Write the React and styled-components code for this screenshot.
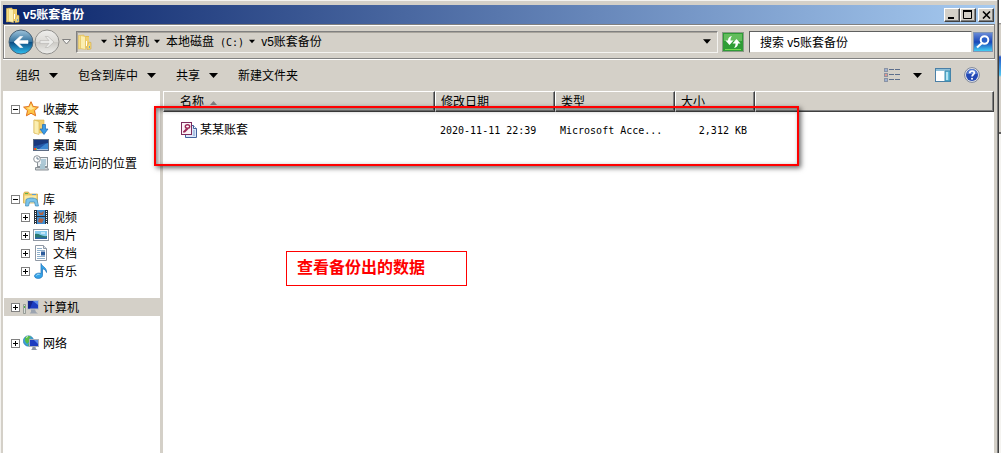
import React from 'react'
import styled, { createGlobalStyle, css } from 'styled-components'

const GlobalStyle = createGlobalStyle`
  * {
    box-sizing: border-box;
  }
  body {
    margin: 0;
    background: #ffffff;
    overflow: hidden;
  }
  body, button, input, table {
    color: #000000;
    font-family: 'Liberation Sans', 'Noto Sans CJK SC', sans-serif;
    font-size: 12px;
    line-height: 18px;
  }
  svg {
    display: block;
    flex: none;
  }
`

const Desktop = styled.div`
  position: relative;
  display: flex;
  min-height: 100vh;
`
const Window = styled.div`
  flex: 1;
  display: flex;
  flex-direction: column;
  padding: 5px 3px 0 1px;
  background: #d4d0c8;
  border-left: 1px solid #f4f3f0;
  border-right: 1px solid #404040;
  box-shadow: inset -1px 0 #808080, inset 0 1px #f4f3f0;
`
const Behind = styled.div`
  width: 2px;
  background: linear-gradient(
    #ffffff 23px, #808080 23px, #d4d0c8 25px, #d4d0c8 55px,
    #2458c8 57px, #4ec3f0 75px, #d4d0c8 77px, #d4d0c8 132px,
    #606060 132px, #606060 134px, #f4f3f0 134px
  );
`

const TitleBar = styled.header`
  display: flex;
  align-items: center;
  height: 19px;
  margin-left: 1px;
  padding: 0 1px 0 2px;
  background: linear-gradient(to right, #0a246a, #a6caf0);
`
const Title = styled.h1`
  flex: 1;
  margin: 0 0 0 2px;
  color: #ffffff;
  font-size: 12px;
  line-height: 18px;
`
const CaptionButton = styled.button`
  display: flex;
  align-items: center;
  justify-content: center;
  width: 16px;
  height: 14px;
  margin-left: ${props => (props.$apart ? '2px' : '0')};
  padding: 0;
  background: #d4d0c8;
  border: 1px solid;
  border-color: #ffffff #404040 #404040 #ffffff;
  box-shadow: inset -1px -1px #808080;
`

const AddressBand = styled.div`
  display: flex;
  align-items: center;
  height: 35px;
  margin-left: 1px;
  padding: 0 1px 0 4px;
  border: 1px solid #808080;
  box-shadow: inset 1px 1px #ffffff, 0 1px #ffffff;
`
const NavButtons = styled.div`
  display: flex;
  align-items: center;
  width: 66px;
`
const PlainButton = styled.button`
  display: flex;
  align-items: center;
  padding: 0;
  background: transparent;
  border: none;
`
const AddressField = styled.nav`
  flex: 1;
  display: flex;
  align-items: center;
  height: 22px;
  margin-left: 2px;
  padding-right: 6px;
  border: 1px solid;
  border-color: #808080 #f4f3f0 #f4f3f0 #808080;
  box-shadow: inset 1px 1px #a8a49c;
`
const Crumbs = styled.ol`
  flex: 1;
  display: flex;
  align-items: center;
  margin: 0;
  padding: 0 0 0 8px;
  list-style: none;
`
const Crumb = styled.li`
  display: flex;
  align-items: center;
  gap: 6px;
  margin-right: 5px;
`
const CrumbLink = styled.a`
  color: #000000;
  text-decoration: none;
  white-space: pre;
`
const Mono = styled.span`
  font-family: 'DejaVu Sans Mono', monospace;
  font-size: 10px;
  line-height: 12px;
`
const RefreshButton = styled(PlainButton)`
  margin: 0 5px 0 4px;
`
const SearchForm = styled.form`
  display: flex;
  align-items: center;
  width: 244px;
  gap: 1px;
`
const SearchInput = styled.input`
  flex: 1;
  min-width: 0;
  height: 22px;
  padding: 0 10px;
  background: #ffffff;
  border: 1px solid;
  border-color: #606060 #d4d0c8 #d4d0c8 #606060;
  border-radius: 0;
  outline: none;
`

const Toolbar = styled.div`
  display: flex;
  align-items: center;
  height: 32px;
  padding: 0 15px 0 14px;
`
const Command = styled(PlainButton)`
  gap: 9px;
  margin-right: 20px;
`
const Label = styled.span`
  padding-top: 2px;
`
const ToolbarRight = styled.div`
  display: flex;
  align-items: center;
  gap: 13px;
  margin-left: auto;
`

const Main = styled.div`
  flex: 1;
  display: flex;
`
const Sidebar = styled.nav`
  width: 158px;
  padding: 9px 0 0 1px;
  background: #ffffff;
  border-left: 1px solid #d4d0c8;
`
const Group = styled.ul`
  margin: 0 0 18px;
  padding: 0;
  list-style: none;
`
const TreeRow = styled.li`
  display: flex;
  align-items: center;
  height: 18px;
  padding-left: ${props => (props.$level === 2 ? '17px' : '7px')};
  ${props => props.$selected && css`
    background: #d4d0c8;
  `}
`
const Toggle = styled.button`
  flex: none;
  display: flex;
  width: 9px;
  height: 9px;
  margin-right: 3px;
  padding: 0;
  background: #ffffff;
  border: 1px solid #808080;
  visibility: ${props => (props.$hidden ? 'hidden' : 'visible')};
`
const TreeLink = styled.a`
  display: flex;
  align-items: center;
  gap: 4px;
  color: #000000;
  text-decoration: none;
  white-space: nowrap;
`

const Content = styled.main`
  flex: 1;
  margin: 0 1px 0 3px;
  background: #ffffff;
`
const FileTable = styled.table`
  width: 100%;
  table-layout: fixed;
  border-collapse: separate;
  border-spacing: 0;
`
const Th = styled.th`
  width: ${props => props.$width || 'auto'};
  height: 21px;
  padding: 2px 0 0 5px;
  background: #d4d0c8;
  border: 1px solid;
  border-color: #ffffff #404040 #404040 #ffffff;
  box-shadow: inset -1px -1px #808080;
  font-weight: normal;
  line-height: 17px;
  text-align: left;
`
const NameHeader = styled.span`
  display: flex;
  align-items: center;
  gap: 6px;
  padding-left: 11px;
`
const Td = styled.td`
  padding: 9px 8px 0 5px;
  text-align: ${props => props.$align || 'left'};
  white-space: nowrap;
`
const FileName = styled.a`
  display: flex;
  align-items: center;
  gap: 3px;
  padding-left: 13px;
  color: #000000;
  text-decoration: none;
`

// red marks drawn over the window
const Highlight = styled.div`
  position: absolute;
  left: 154px;
  top: 106px;
  width: 645px;
  height: 60px;
  border: 2px solid #ff0000;
  box-shadow: 2px 2px 5px rgba(0, 0, 0, 0.6), inset 2px 2px 5px rgba(0, 0, 0, 0.5);
`
const Note = styled.div`
  position: absolute;
  left: 286px;
  top: 251px;
  width: 181px;
  padding: 4px 10px 5px;
  border: 1px solid #ff0000;
  color: #ff0000;
  font-size: 16px;
  font-weight: bold;
  line-height: 24px;
`

const Arrow = ({ size = 9, color = '#000000' }) => (
  <svg width={size} height="5" viewBox="0 0 9 5"><path d="M0 0h9L4.500 5z" fill={color} /></svg>
)

const FolderIcon = () => (
  <svg width="16" height="16" viewBox="0 0 16 16">
    <path d="M1.500 1.500L7 1v13l-5.500 1z" fill="#f6dd82" stroke="#e0bd58" strokeWidth=".6" />
    <path d="M7 2h5v12H7z" fill="#e3bc50" />
    <path d="M3.500 1.500l5 1v13l-5-1z" fill="#fbeeb0" stroke="#e0bd58" strokeWidth=".6" />
    <path d="M9 3h3v11H9z" fill="#f0d070" />
    <path d="M12 8l2 .5v6.500l-4 .5v-3z" fill="#f4d878" stroke="#d0a848" strokeWidth=".6" />
    <path d="M9.500 7v5" stroke="#ffffff" />
    <path d="M12.500 12v2" stroke="#6fa8c8" />
  </svg>
)

const BackForwardIcon = ({ forward }) => (
  <svg width="26" height="26" viewBox="0 0 26 26">
    <defs>
      <linearGradient id={forward ? 'fwd' : 'back'} x2="0" y2="1">
        <stop offset="0" stopColor={forward ? '#eeeeec' : '#9fc4dc'} />
        <stop offset=".48" stopColor={forward ? '#dcdad6' : '#36749f'} />
        <stop offset=".5" stopColor={forward ? '#cbc9c4' : '#0c4a80'} />
        <stop offset="1" stopColor={forward ? '#eeeeec' : '#2fc0f2'} />
      </linearGradient>
    </defs>
    <circle cx="13" cy="13" r="12" fill={`url(#${forward ? 'fwd' : 'back'})`} stroke={forward ? '#92918e' : '#4c6478'} />
    <g transform={forward ? 'matrix(-1 0 0 1 26 0)' : undefined}>
      <path
        d="M6 13l6-5.500h2.700L11 11.600h9v2.800h-9l3.700 4.100H12z"
        fill={forward ? '#ececea' : '#ffffff'}
        stroke={forward ? '#b2b0ac' : '#ffffff'}
        strokeWidth=".6"
      />
    </g>
  </svg>
)

const RefreshIcon = () => (
  <svg width="22" height="20" viewBox="0 0 22 20">
    <rect x=".5" y=".5" width="21" height="19" fill="#2f9c36" stroke="#8a9a86" />
    <path d="M2 2h18v7H2z" fill="#62bd5c" />
    <path d="M3 17h16v1H3z" fill="#74dc52" />
    <path d="M10 4C7.500 4.500 6 6 6 8.500H3.500L7.500 13l4-4.500H8.500C8.500 6.500 9 5.200 10 4z" fill="#ffffff" />
    <path d="M12 16c2.500-.5 4-2 4-4.500h2.500L14.500 7l-4 4.500h3c0 2-.5 3.300-1.500 4.500z" fill="#ffffff" />
  </svg>
)

const SearchIcon = () => (
  <svg width="20" height="20" viewBox="0 0 20 20">
    <defs>
      <linearGradient id="find" x2="0" y2="1">
        <stop offset="0" stopColor="#6d8ed8" />
        <stop offset=".5" stopColor="#1746b8" />
        <stop offset="1" stopColor="#46d4f6" />
      </linearGradient>
    </defs>
    <rect x=".5" y=".5" width="19" height="19" fill="url(#find)" stroke="#8296b4" />
    <circle cx="11.500" cy="8" r="3.800" fill="#2a60c8" stroke="#ffffff" strokeWidth="2" />
    <path d="M9 11l-5 4.500" stroke="#ffffff" strokeWidth="2.200" />
  </svg>
)

const ViewsIcon = () => (
  <svg width="16" height="14" viewBox="0 0 16 14">
    {[0, 5, 10].map(y => (
      <g key={y}>
        <rect x=".5" y={y + 0.5} width="3" height="3" fill="#ffffff" stroke="#8c94a4" />
        <path d={`M1 ${y + 2}h2`} stroke={y === 5 ? '#c03020' : '#3a62a8'} />
        <path d={`M5 ${y + 1.5}h5M11 ${y + 1.5}h5`} stroke="#5c6e8c" />
      </g>
    ))}
  </svg>
)

const PaneIcon = () => (
  <svg width="16" height="14" viewBox="0 0 16 14">
    <rect x=".5" y=".5" width="15" height="13" fill="#ffffff" stroke="#4a7fa6" />
    <path d="M1 1h14v2H1z" fill="#8ebfd8" />
    <path d="M10 3h5v10h-5z" fill="#5fb9d8" stroke="#3f8cae" />
    <path d="M11 4h2v8h-2z" fill="#b4e4f2" />
  </svg>
)

const HelpIcon = () => (
  <svg width="16" height="16" viewBox="0 0 16 16">
    <circle cx="8" cy="8" r="7.400" fill="#e4e6ec" stroke="#7d8698" />
    <circle cx="8" cy="8" r="6" fill="#2449b4" />
    <path d="M3 7a5 5 0 0 1 10 0z" fill="#5c80d4" />
    <path d="M5.700 6.300C5.800 3.300 10.500 3.300 10.300 6c-.1 1.500-2.200 1.600-2.200 3.500" fill="none" stroke="#ffffff" strokeWidth="1.700" />
    <circle cx="8" cy="11.800" r="1" fill="#ffffff" />
  </svg>
)

const StarIcon = () => (
  <svg width="16" height="16" viewBox="0 0 16 16">
    <path d="M8 .7l2.200 4.800 5.200.6-3.900 3.500 1.100 5.200L8 12.200l-4.600 2.600 1.100-5.200L.6 6.100l5.200-.6z" fill="#fdc648" stroke="#e2701c" />
    <path d="M8 3l1.400 3.500 3 .3L8 9 3.600 6.800l3-.3z" fill="#ffe89a" />
  </svg>
)

const DownloadIcon = () => (
  <svg width="16" height="16" viewBox="0 0 16 16">
    <path d="M1 1h10v13H1z" fill="#efcf70" stroke="#d8b24c" strokeWidth=".6" />
    <path d="M1 1l5 1.500v13L1 14z" fill="#fbeeb0" stroke="#d8b24c" strokeWidth=".6" />
    <path d="M9.500 5.500h3V10h2.500L11 15.500 7 10h2.500z" fill="#3a9be4" stroke="#1c68b4" strokeWidth=".7" />
  </svg>
)

const ScreenIcon = () => (
  <svg width="16" height="16" viewBox="0 0 16 16">
    <rect x=".5" y="2.500" width="15" height="11" fill="#2458a8" stroke="#5d6c84" />
    <path d="M1 3h14v3C9 6 6 9 1 9z" fill="#18387c" />
    <path d="M6 12c3-2 5-5 9-6v6z" fill="#3c86d0" />
    <path d="M1 12h14v1H1z" fill="#a9c4e4" />
    <path d="M1 11h2v2H1z" fill="#e8502c" /><path d="M3 11h1v2H3z" fill="#7cc44c" />
  </svg>
)

const RecentIcon = () => (
  <svg width="16" height="16" viewBox="0 0 16 16">
    <rect x="4.500" y="2.500" width="10" height="9" fill="#eef2f4" stroke="#8a9298" />
    <path d="M8 5h5M8 7h5M8 9h5" stroke="#6fa0b8" />
    <path d="M2.500 12.500h12l1 2.500h-13z" fill="#d0d4d6" stroke="#8a9298" />
    <path d="M7 9h5v5H7z" fill="#a9c6d2" />
    <circle cx="4" cy="4" r="3.300" fill="#ffffff" stroke="#8a9298" />
    <path d="M4 2v2h2" fill="none" stroke="#4c6478" strokeWidth=".8" />
  </svg>
)

const LibraryIcon = () => (
  <svg width="16" height="16" viewBox="0 0 16 16">
    <path d="M.500 3l1-2h4l1 2h8v9H.500z" fill="#ecc862" stroke="#d0a848" strokeWidth=".7" />
    <path d="M1.500 4.500h12V12h-12z" fill="#fae9a2" />
    <path d="M2 2.500h3" stroke="#62b04c" /><path d="M9 3.500h4" stroke="#5b9ed4" />
    <path d="M3 8.500c3-2 8-2 11 0l1.500 6.500h-3l-1-4h-5l-1 4h-3z" fill="#7cc4ea" stroke="#3e88b8" strokeWidth=".7" />
  </svg>
)

const VideoIcon = () => (
  <svg width="16" height="16" viewBox="0 0 16 16">
    <path d="M1 1h14v14H1z" fill="#28323c" />
    <path d="M4 1h8v6H4zM4 8h8v7H4z" fill="#3f8fd4" />
    <path d="M5 2l3 2 3-2-1 4H7zM6 9l5 1-2 4-4-1z" fill="#b06448" />
    <path d="M2.500 2v13M13.500 2v13" stroke="#ffffff" strokeDasharray="1 1" />
  </svg>
)

const PictureIcon = () => (
  <svg width="16" height="16" viewBox="0 0 16 16">
    <rect x=".5" y="2.500" width="15" height="11" fill="#ffffff" stroke="#8f98a4" />
    <path d="M2 4h12v8H2z" fill="#84cbee" />
    <path d="M2 7c4-1 7 3 12 2v3H2z" fill="#2b7b72" />
    <path d="M2 10.500h12V12H2z" fill="#2c66a8" />
    <path d="M8 6h4" stroke="#ffffff" />
  </svg>
)

const DocumentIcon = () => (
  <svg width="16" height="16" viewBox="0 0 16 16">
    <path d="M2.500.5h8l3 3v12h-11z" fill="#ffffff" stroke="#8f98a4" />
    <path d="M10.500.5v3h3" fill="#dce4ec" stroke="#8f98a4" />
    <path d="M4 3.500h5M4 5.500h8M4 7.500h3M4 9.500h3M4 11.500h8M4 13.500h8" stroke="#8eb0cc" />
    <path d="M8 6.500h4v4H8z" fill="#2c5c9c" />
  </svg>
)

const MusicIcon = () => (
  <svg width="16" height="16" viewBox="0 0 16 16">
    <path d="M8 .5c1 3 6 4 5.500 9-.8-2.500-2-3.300-4-3.700v6.700c0 3.500-7.500 4-8 .7-.3-2.500 4-3.700 6.500-2.700z" fill="#35a4e8" stroke="#1c70b8" strokeWidth=".7" />
    <path d="M3.500 12.500c.5-1 2-1.300 3-1" fill="none" stroke="#b4e4fa" />
  </svg>
)

const ComputerIcon = () => (
  <svg width="16" height="16" viewBox="0 0 16 16">
    <path d="M.5 5.500h2v9h-2z" fill="#d8dcd8" stroke="#7c8480" strokeWidth=".7" />
    <path d="M1 7h1v2H1z" fill="#4cb43c" />
    <rect x="4.500" y="1.500" width="11" height="8.500" fill="#1c3cc0" stroke="#b4bac4" />
    <path d="M5 2h5L7 9.500H5z" fill="#14248c" />
    <path d="M10 2h5v4z" fill="#5c8ae8" />
    <path d="M8 10.500h4l1 2.500 2 1.500H6.500L8 13z" fill="#9ca4b0" />
  </svg>
)

const NetworkIcon = () => (
  <svg width="16" height="16" viewBox="0 0 16 16">
    <circle cx="5.500" cy="6" r="5.200" fill="#3a9fd8" stroke="#2a72a8" strokeWidth=".6" />
    <path d="M2 3c2-3 5-2 6-1L6 4l1 2-3 3-2-3zM5 9l2 1-2 1z" fill="#58bc48" />
    <path d="M3 2.500l2-1" stroke="#d8f4c4" />
    <rect x="6.500" y="4.500" width="9" height="7" fill="#1c3cc0" stroke="#a8b0bc" />
    <path d="M11 5h4v4z" fill="#5c8ae8" />
    <path d="M9.500 12h3l.5 2 1.500 1h-6.500l1-1z" fill="#8c96a4" />
  </svg>
)

const AccessIcon = () => (
  <svg width="16" height="16" viewBox="0 0 16 16">
    <path d="M4.500 3.500h8l3 3v9h-11z" fill="#dce8fa" stroke="#42629c" />
    <path d="M12.500 3.500v3h3" fill="#ffffff" stroke="#42629c" />
    <path d="M12 9h2M12 11h2M12 13h2" stroke="#7c9ccc" />
    <rect x=".5" y=".5" width="10" height="12" fill="#fbf2f6" stroke="#7c2c5c" />
    <ellipse cx="6.500" cy="4.500" rx="2.200" ry="1.800" fill="#ffffff" stroke="#9c2858" strokeWidth="1.400" />
    <path d="M5.500 6L2 9.500v1h2L7.500 7" fill="#9c2858" />
  </svg>
)

const SignIcon = ({ open }) => (
  <svg width="7" height="7" viewBox="0 0 7 7">
    <path d={open ? 'M1 3.500h5' : 'M1 3.500h5M3.500 1v5'} stroke="#000000" />
  </svg>
)

const tree = [
  [
    { label: '收藏夹', icon: StarIcon, open: true },
    { label: '下载', icon: DownloadIcon, level: 2, leaf: true },
    { label: '桌面', icon: ScreenIcon, level: 2, leaf: true },
    { label: '最近访问的位置', icon: RecentIcon, level: 2, leaf: true }
  ],
  [
    { label: '库', icon: LibraryIcon, open: true },
    { label: '视频', icon: VideoIcon, level: 2 },
    { label: '图片', icon: PictureIcon, level: 2 },
    { label: '文档', icon: DocumentIcon, level: 2 },
    { label: '音乐', icon: MusicIcon, level: 2 }
  ],
  [{ label: '计算机', icon: ComputerIcon, selected: true }],
  [{ label: '网络', icon: NetworkIcon }]
]

const Explorer = () => (
  <Window>
    <TitleBar>
      <FolderIcon />
      <Title>v5账套备份</Title>
      <CaptionButton aria-label="最小化">
        <svg width="10" height="8"><path d="M1 7h6" stroke="#000000" strokeWidth="2" /></svg>
      </CaptionButton>
      <CaptionButton aria-label="最大化">
        <svg width="10" height="9"><path d="M.5 1h8M.5 1v7.500h8V1" fill="none" stroke="#000000" /><path d="M0 1h9" stroke="#000000" strokeWidth="2" /></svg>
      </CaptionButton>
      <CaptionButton aria-label="关闭" $apart>
        <svg width="9" height="8"><path d="M1 .5l7 7M8 .5l-7 7" stroke="#000000" strokeWidth="1.600" /></svg>
      </CaptionButton>
    </TitleBar>

    <AddressBand>
      <NavButtons>
        <PlainButton aria-label="后退"><BackForwardIcon /></PlainButton>
        <PlainButton aria-label="前进"><BackForwardIcon forward /></PlainButton>
        <PlainButton aria-label="最近的页面">
          <svg width="12" height="6" viewBox="0 0 12 6"><path d="M2.500.5h8l-4 4.500z" fill="#f4f3f0" stroke="#808080" /></svg>
        </PlainButton>
      </NavButtons>
      <AddressField aria-label="地址">
        <FolderIcon />
        <Crumbs>
          <Crumb><Arrow size={6} /><CrumbLink href="#computer">计算机</CrumbLink></Crumb>
          <Crumb><Arrow size={6} /><CrumbLink href="#c">本地磁盘<Mono> (C:)</Mono></CrumbLink></Crumb>
          <Crumb><Arrow size={6} /><CrumbLink href="#backup">v5账套备份</CrumbLink></Crumb>
        </Crumbs>
        <PlainButton aria-label="以前的位置"><Arrow size={8} /></PlainButton>
      </AddressField>
      <RefreshButton aria-label="刷新"><RefreshIcon /></RefreshButton>
      <SearchForm onSubmit={e => e.preventDefault()}>
        <SearchInput aria-label="搜索" defaultValue="搜索 v5账套备份" />
        <PlainButton type="submit" aria-label="开始搜索"><SearchIcon /></PlainButton>
      </SearchForm>
    </AddressBand>

    <Toolbar>
      <Command><Label>组织</Label><Arrow /></Command>
      <Command><Label>包含到库中</Label><Arrow /></Command>
      <Command><Label>共享</Label><Arrow /></Command>
      <Command><Label>新建文件夹</Label></Command>
      <ToolbarRight>
        <PlainButton aria-label="更改视图"><ViewsIcon /></PlainButton>
        <PlainButton aria-label="更多选项"><Arrow /></PlainButton>
        <PlainButton aria-label="预览窗格"><PaneIcon /></PlainButton>
        <PlainButton aria-label="帮助"><HelpIcon /></PlainButton>
      </ToolbarRight>
    </Toolbar>

    <Main>
      <Sidebar>
        {tree.map(group => (
          <Group key={group[0].label}>
            {group.map(({ label, icon: Icon, level, open, leaf, selected }) => (
              <TreeRow key={label} $level={level} $selected={selected}>
                <Toggle aria-label={label} $hidden={leaf}><SignIcon open={open} /></Toggle>
                <TreeLink href="#tree"><Icon /><Label>{label}</Label></TreeLink>
              </TreeRow>
            ))}
          </Group>
        ))}
      </Sidebar>
      <Content>
        <FileTable>
          <thead>
            <tr>
              <Th $width="272px">
                <NameHeader>
                  名称
                  <svg width="7" height="4"><path d="M0 4h7L3.500 0z" fill="#808080" /></svg>
                </NameHeader>
              </Th>
              <Th $width="120px">修改日期</Th>
              <Th $width="120px">类型</Th>
              <Th $width="80px">大小</Th>
              <Th />
            </tr>
          </thead>
          <tbody>
            <tr>
              <Td><FileName href="#file"><AccessIcon />某某账套</FileName></Td>
              <Td><Mono>2020-11-11 22:39</Mono></Td>
              <Td><Mono>Microsoft Acce...</Mono></Td>
              <Td $align="right"><Mono>2,312 KB</Mono></Td>
              <Td />
            </tr>
          </tbody>
        </FileTable>
      </Content>
    </Main>
  </Window>
)

const App = () => (
  <>
    <GlobalStyle />
    <Desktop>
      <Explorer />
      <Behind />
      <Highlight />
      <Note>查看备份出的数据</Note>
    </Desktop>
  </>
)

export default App
